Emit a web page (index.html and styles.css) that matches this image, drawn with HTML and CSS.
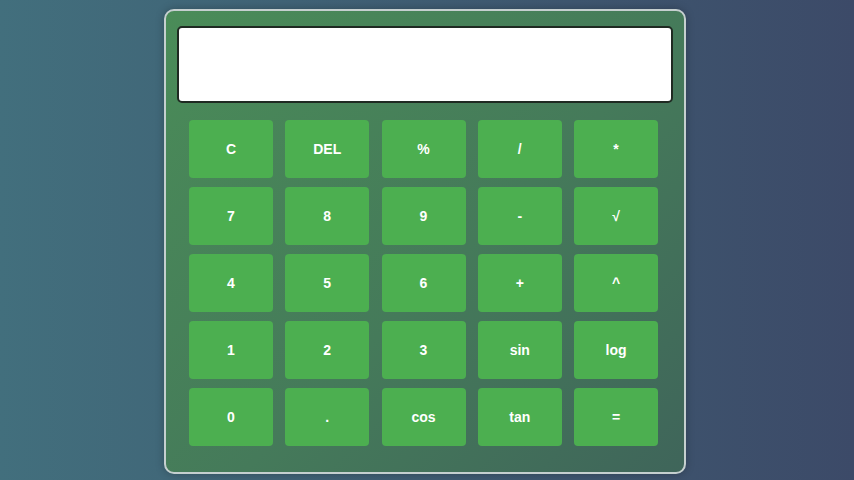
FILE: index.html
```html
<!DOCTYPE html>
<html>
<head>
<meta charset="utf-8">
<link rel="stylesheet" href="styles.css">
</head>
<body>
<div class="calc">
  <div class="display"></div>
  <div class="keys">
    <button class="key">C</button>
    <button class="key">DEL</button>
    <button class="key">%</button>
    <button class="key">/</button>
    <button class="key">*</button>
    <button class="key">7</button>
    <button class="key">8</button>
    <button class="key">9</button>
    <button class="key">-</button>
    <button class="key">√</button>
    <button class="key">4</button>
    <button class="key">5</button>
    <button class="key">6</button>
    <button class="key">+</button>
    <button class="key">^</button>
    <button class="key">1</button>
    <button class="key">2</button>
    <button class="key">3</button>
    <button class="key">sin</button>
    <button class="key">log</button>
    <button class="key">0</button>
    <button class="key">.</button>
    <button class="key">cos</button>
    <button class="key">tan</button>
    <button class="key">=</button>
  </div>
</div>
</body>
</html>
```
FILE: styles.css
```css
html, body {
  margin: 0;
  height: 100%;
}
body {
  background: linear-gradient(to right, #426f7d, #3c4a68);
  font-family: "Liberation Sans", Arial, sans-serif;
  display: flex;
  justify-content: center;
  align-items: flex-start;
  padding-top: 9px;
  box-sizing: border-box;
}
.calc {
  width: 522px;
  height: 465px;
  margin-right: 4px;
  box-sizing: border-box;
  border: 2px solid #c5cfcf;
  border-radius: 10px;
  background: linear-gradient(135deg, #4a8c58 0%, #457a5a 55%, #3f655a 100%);
  padding: 15px 11px 24px;
  box-shadow: 0 0 8px rgba(0,0,0,0.25);
}
.display {
  height: 77px;
  box-sizing: border-box;
  background: #fff;
  border: 2px solid #1f2a22;
  border-radius: 5px;
}
.keys {
  margin-top: 17px;
  padding: 0 12px;
  display: grid;
  grid-template-columns: repeat(5, 84px);
  grid-auto-rows: 58px;
  column-gap: 12.25px;
  row-gap: 9px;
}
.key {
  background: #4caf50;
  border: none;
  border-radius: 4px;
  color: #fff;
  font-family: "Liberation Sans", Arial, sans-serif;
  font-weight: bold;
  font-size: 14px;
  padding: 0;
}
```
